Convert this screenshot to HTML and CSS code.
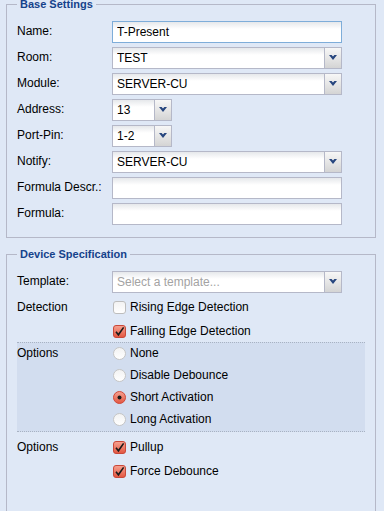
FILE: index.html
```html
<!DOCTYPE html>
<html>
<head>
<meta charset="utf-8">
<link rel="stylesheet" href="styles.css">
</head>
<body>
<div class="page">
  <fieldset class="fs fs1">
    <legend>Base Settings</legend>
    <div class="row"><label class="lbl">Name:</label><input class="field focus" value="T-Present"></div>
    <div class="row"><label class="lbl">Room:</label>
      <div class="combo"><input class="cinput" value="TEST" readonly><span class="trigger"><svg width="8" height="5" viewBox="0 0 8 5"><polygon points="0,0 2.6,0 4,1.6 5.4,0 8,0 4,5" fill="#27467e"/></svg></span></div></div>
    <div class="row"><label class="lbl">Module:</label>
      <div class="combo"><input class="cinput" value="SERVER-CU" readonly><span class="trigger"><svg width="8" height="5" viewBox="0 0 8 5"><polygon points="0,0 2.6,0 4,1.6 5.4,0 8,0 4,5" fill="#27467e"/></svg></span></div></div>
    <div class="row"><label class="lbl">Address:</label>
      <div class="combo short"><input class="cinput" value="13" readonly><span class="trigger"><svg width="8" height="5" viewBox="0 0 8 5"><polygon points="0,0 2.6,0 4,1.6 5.4,0 8,0 4,5" fill="#27467e"/></svg></span></div></div>
    <div class="row"><label class="lbl">Port-Pin:</label>
      <div class="combo short"><input class="cinput" value="1-2" readonly><span class="trigger"><svg width="8" height="5" viewBox="0 0 8 5"><polygon points="0,0 2.6,0 4,1.6 5.4,0 8,0 4,5" fill="#27467e"/></svg></span></div></div>
    <div class="row"><label class="lbl">Notify:</label>
      <div class="combo"><input class="cinput" value="SERVER-CU" readonly><span class="trigger"><svg width="8" height="5" viewBox="0 0 8 5"><polygon points="0,0 2.6,0 4,1.6 5.4,0 8,0 4,5" fill="#27467e"/></svg></span></div></div>
    <div class="row"><label class="lbl">Formula Descr.:</label><input class="field" value=""></div>
    <div class="row"><label class="lbl">Formula:</label><input class="field" value=""></div>
  </fieldset>

  <fieldset class="fs fs2">
    <legend>Device Specification</legend>
    <div class="row tpl"><label class="lbl">Template:</label>
      <div class="combo"><input class="cinput" placeholder="Select a template..." readonly><span class="trigger"><svg width="8" height="5" viewBox="0 0 8 5"><polygon points="0,0 2.6,0 4,1.6 5.4,0 8,0 4,5" fill="#27467e"/></svg></span></div></div>

    <div class="group">
      <div class="glbl">Detection</div>
      <div class="opts">
        <div class="opt"><svg class="ic" width="13" height="13" viewBox="0 0 13 13"><defs><linearGradient id="gw" x1="0" y1="0" x2="0" y2="1"><stop offset="0" stop-color="#f2f2f2"/><stop offset="1" stop-color="#ffffff"/></linearGradient></defs><rect x="0.5" y="0.5" width="12" height="12" rx="2.5" fill="url(#gw)" stroke="#bdbdbd"/></svg><span>Rising Edge Detection</span></div>
        <div class="opt"><svg class="ic" width="13" height="13" viewBox="0 0 13 13"><defs><linearGradient id="gr" x1="0" y1="0" x2="0" y2="1"><stop offset="0" stop-color="#f6a393"/><stop offset="1" stop-color="#e3553f"/></linearGradient></defs><rect x="0.5" y="0.5" width="12" height="12" rx="2.5" fill="url(#gr)" stroke="#c9483a"/><path d="M3 6.8 L5.4 9.8 L10.6 2.4" fill="none" stroke="#1a1a1a" stroke-width="1.6"/></svg><span>Falling Edge Detection</span></div>
      </div>
    </div>

    <div class="group region">
      <div class="glbl">Options</div>
      <div class="opts">
        <div class="ropt"><svg class="ic" width="13" height="13" viewBox="0 0 13 13"><circle cx="6.5" cy="6.5" r="6" fill="url(#gw)" stroke="#c4c4c4"/></svg><span>None</span></div>
        <div class="ropt"><svg class="ic" width="13" height="13" viewBox="0 0 13 13"><circle cx="6.5" cy="6.5" r="6" fill="url(#gw)" stroke="#c4c4c4"/></svg><span>Disable Debounce</span></div>
        <div class="ropt"><svg class="ic" width="13" height="13" viewBox="0 0 13 13"><circle cx="6.5" cy="6.5" r="6" fill="url(#gr)" stroke="#cf4a3a"/><circle cx="6.5" cy="6.5" r="2" fill="#1a1a1a"/></svg><span>Short Activation</span></div>
        <div class="ropt"><svg class="ic" width="13" height="13" viewBox="0 0 13 13"><circle cx="6.5" cy="6.5" r="6" fill="url(#gw)" stroke="#c4c4c4"/></svg><span>Long Activation</span></div>
      </div>
    </div>

    <div class="group after">
      <div class="glbl">Options</div>
      <div class="opts">
        <div class="opt"><svg class="ic" width="13" height="13" viewBox="0 0 13 13"><rect x="0.5" y="0.5" width="12" height="12" rx="2.5" fill="url(#gr)" stroke="#c9483a"/><path d="M3 6.8 L5.4 9.8 L10.6 2.4" fill="none" stroke="#1a1a1a" stroke-width="1.6"/></svg><span>Pullup</span></div>
        <div class="opt"><svg class="ic" width="13" height="13" viewBox="0 0 13 13"><rect x="0.5" y="0.5" width="12" height="12" rx="2.5" fill="url(#gr)" stroke="#c9483a"/><path d="M3 6.8 L5.4 9.8 L10.6 2.4" fill="none" stroke="#1a1a1a" stroke-width="1.6"/></svg><span>Force Debounce</span></div>
      </div>
    </div>
  </fieldset>
</div>
</body>
</html>
```

FILE: styles.css
```css
html, body {
  margin: 0;
  padding: 0;
  background: #dfe8f6;
  overflow: hidden;
}
body {
  font: 12px "Liberation Sans", Arial, sans-serif;
  color: #000;
}
.page {
  padding: 0 8px 0 6px;
}
.fs {
  border: 1px solid #b5b8c8;
  margin: 0;
  padding: 10px 10px 8px 10px;
  min-width: 0;
}
.fs1 {
  margin-top: -2px;
}
.fs2 {
  margin-top: 10px;
  padding-bottom: 60px;
}
legend {
  font: bold 11px/13px "Liberation Sans", Arial, sans-serif;
  color: #15428b;
  padding: 0 3px;
}
.row {
  display: flex;
  height: 22px;
  margin-bottom: 4px;
}
.row.tpl {
  margin-bottom: 2px;
}
.lbl {
  width: 95px;
  flex: none;
  padding-top: 3px;
  line-height: 14px;
}
.field, .combo {
  width: 230px;
  height: 22px;
  box-sizing: border-box;
  border: 1px solid #b5b8c8;
  background: linear-gradient(to bottom, #e6e8eb 0, #ffffff 7px, #ffffff 100%);
}
.field {
  font: 12px "Liberation Sans", Arial, sans-serif;
  line-height: 20px;
  padding: 0 4px;
  margin: 0;
  color: #000;
  outline: none;
}
.field.focus {
  border-color: #7eadd9;
}
.combo {
  display: flex;
}
.combo.short {
  width: 60px;
}
.cinput {
  flex: 1;
  min-width: 0;
  border: 0;
  margin: 0;
  padding: 0 4px;
  background: transparent;
  font: 12px "Liberation Sans", Arial, sans-serif;
  line-height: 20px;
  height: 20px;
  color: #000;
  outline: none;
}
.cinput::placeholder {
  color: #a3a3a3;
}
.trigger {
  width: 17px;
  flex: none;
  box-sizing: border-box;
  border-left: 1px solid #b5b8c8;
  background: linear-gradient(to bottom, #f7f7f7 0, #e6e6e6 50%, #d4d4d4 100%);
  display: flex;
  align-items: center;
  justify-content: center;
  padding-bottom: 1px;
}
.trigger svg {
  display: block;
}
.group {
  display: flex;
}
.glbl {
  width: 95px;
  flex: none;
  line-height: 24px;
}
.opts {
  display: flex;
  flex-direction: column;
}
.opt {
  display: flex;
  align-items: center;
  height: 24px;
  line-height: 14px;
}
.ic {
  display: block;
  margin-left: 1px;
  margin-right: 4px;
  flex: none;
}
.region {
  margin-top: -1px;
  background: #d2ddef;
  border-top: 1px dotted #a8b2c2;
  border-bottom: 1px dotted #a8b2c2;
}
.region .glbl {
  line-height: 20px;
}
.ropt {
  display: flex;
  align-items: center;
  height: 22px;
  box-sizing: border-box;
  padding-bottom: 2px;
  line-height: 14px;
}
.group.after {
  margin-top: 3px;
}
```
